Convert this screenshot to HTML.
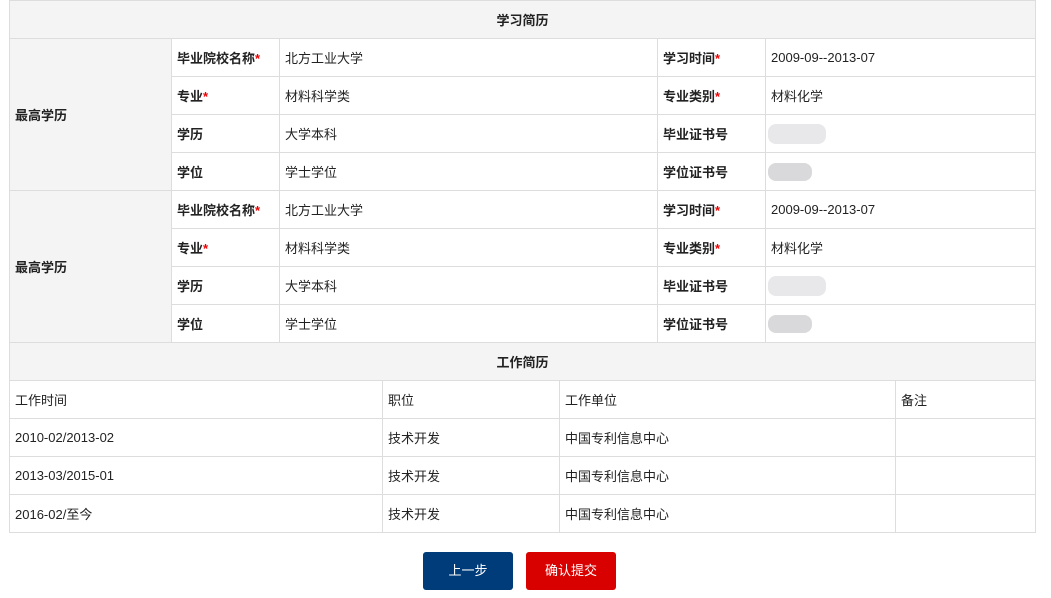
<!DOCTYPE html><html><head><meta charset="utf-8"><style>
body{margin:0;background:#fff;font-family:"Liberation Sans","Noto Sans CJK SC",sans-serif;font-size:13px;color:#222;}
table{position:absolute;left:9px;border-collapse:collapse;table-layout:fixed;width:1026px;}
td{border:1px solid #ddd;height:37px;padding:0 0 0 5px;box-sizing:border-box;white-space:nowrap;}
.h{background:#f4f4f4;text-align:center;font-weight:bold;padding:0;}
.g{background:#f4f4f4;font-weight:bold;}
.b{font-weight:bold;}
.r{color:#e00;}
.blur{display:inline-block;vertical-align:middle;border-radius:8px;margin-left:2px;}
.btn{position:absolute;top:552px;width:90px;height:38px;border-radius:3px;color:#fff;text-align:center;line-height:38px;font-size:13px;}
</style></head><body>
<table style="top:0">
<colgroup><col style="width:162px"><col style="width:108px"><col style="width:378px"><col style="width:108px"><col style="width:270px"></colgroup>
<tr style="height:38px"><td class="h" colspan="5">学习简历</td></tr>
<tr style="height:38px"><td class="g" rowspan="4">最高学历</td><td class="b">毕业院校名称<span class="r">*</span></td><td>北方工业大学</td><td class="b">学习时间<span class="r">*</span></td><td>2009-09--2013-07</td></tr>
<tr style="height:38px"><td class="b">专业<span class="r">*</span></td><td>材料科学类</td><td class="b">专业类别<span class="r">*</span></td><td>材料化学</td></tr>
<tr style="height:38px"><td class="b">学历</td><td>大学本科</td><td class="b">毕业证书号</td><td style="padding:0"><span class="blur" style="width:58px;height:20px;background:#e8e8ea"></span></td></tr>
<tr style="height:38px"><td class="b">学位</td><td>学士学位</td><td class="b">学位证书号</td><td style="padding:0"><span class="blur" style="width:44px;height:18px;background:#d9d9db"></span></td></tr>
<tr style="height:38px"><td class="g" rowspan="4">最高学历</td><td class="b">毕业院校名称<span class="r">*</span></td><td>北方工业大学</td><td class="b">学习时间<span class="r">*</span></td><td>2009-09--2013-07</td></tr>
<tr style="height:38px"><td class="b">专业<span class="r">*</span></td><td>材料科学类</td><td class="b">专业类别<span class="r">*</span></td><td>材料化学</td></tr>
<tr style="height:38px"><td class="b">学历</td><td>大学本科</td><td class="b">毕业证书号</td><td style="padding:0"><span class="blur" style="width:58px;height:20px;background:#e8e8ea"></span></td></tr>
<tr style="height:38px"><td class="b">学位</td><td>学士学位</td><td class="b">学位证书号</td><td style="padding:0"><span class="blur" style="width:44px;height:18px;background:#d9d9db"></span></td></tr>
</table>
<table style="top:342px">
<colgroup><col style="width:373px"><col style="width:177px"><col style="width:336px"><col style="width:140px"></colgroup>
<tr style="height:38px"><td class="h" colspan="4">工作简历</td></tr>
<tr style="height:38px"><td>工作时间</td><td>职位</td><td>工作单位</td><td>备注</td></tr>
<tr style="height:38px"><td>2010-02/2013-02</td><td>技术开发</td><td>中国专利信息中心</td><td></td></tr>
<tr style="height:38px"><td>2013-03/2015-01</td><td>技术开发</td><td>中国专利信息中心</td><td></td></tr>
<tr style="height:38px"><td>2016-02/至今</td><td>技术开发</td><td>中国专利信息中心</td><td></td></tr>
</table>
<div class="btn" style="left:423px;background:#003c7a">上一步</div>
<div class="btn" style="left:526px;background:#d90000">确认提交</div>
</body></html>
